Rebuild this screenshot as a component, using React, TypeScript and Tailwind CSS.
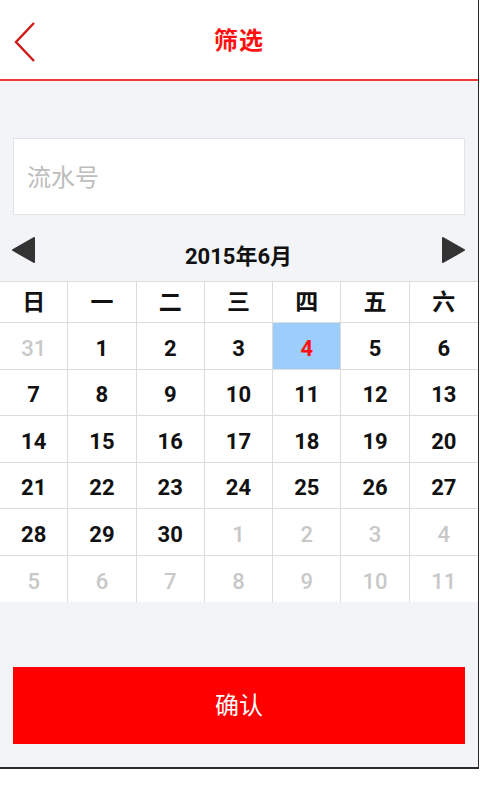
const weekdays = ["日", "一", "二", "三", "四", "五", "六"];

type Day = { n: number; cur: boolean };

const days: Day[] = [
  { n: 31, cur: false },
  ...Array.from({ length: 30 }, (_, i) => ({ n: i + 1, cur: true })),
  ...Array.from({ length: 11 }, (_, i) => ({ n: i + 1, cur: false })),
];

const font = { fontFamily: 'Roboto, "Noto Sans CJK SC", sans-serif' };

export default function App() {
  return (
    <div className="w-[480px] h-[800px] bg-white" style={font}>
      <div className="w-[479px] h-[769px] flex flex-col bg-[#f2f4f8] border-r border-b-2 border-[#2a2a2a]">
        {/* header */}
        <div className="h-[81px] bg-white border-b-2 border-[#f03a3a] relative flex items-center justify-center">
          <svg className="absolute left-[13px] top-[21px]" width="24" height="42" viewBox="0 0 24 42">
            <path d="M21 2 L3 21 L21 40" fill="none" stroke="#d01616" strokeWidth="2.4" />
          </svg>
          <span className="text-[24px] font-bold text-[#ff1010] tracking-[1px] mt-[2px]">筛选</span>
        </div>

        {/* input */}
        <div className="mt-[57px] mx-[13px] h-[77px] bg-white border border-[#e1e3e8] flex items-center px-[13px]">
          <span className="text-[24px] text-[#bdbdbd] mt-[2px]">流水号</span>
        </div>

        {/* month nav */}
        <div className="h-[66px] flex items-center justify-between px-[10px] pt-[4px]">
          <svg width="26" height="28" viewBox="0 0 26 28">
            <path d="M24 2 L3 14 L24 26 Z" fill="#333" stroke="#333" strokeWidth="2" strokeLinejoin="round" />
          </svg>
          <span className="text-[22px] font-bold text-[#111] mt-[12px]">2015年6月</span>
          <svg width="26" height="28" viewBox="0 0 26 28" className="mr-[1px]">
            <path d="M2 2 L23 14 L2 26 Z" fill="#333" stroke="#333" strokeWidth="2" strokeLinejoin="round" />
          </svg>
        </div>

        {/* calendar */}
        <div className="bg-white border-t border-[#dcdcdc]">
          <div className="grid grid-cols-7 h-[41px]">
            {weekdays.map((w, i) => (
              <div
                key={w}
                className={`flex items-center justify-center pt-[3px] text-[23px] font-bold text-[#111] border-b border-[#dcdcdc] ${i < 6 ? "border-r" : ""}`}
              >
                {w}
              </div>
            ))}
          </div>
          <div className="grid grid-cols-7">
            {days.map((d, i) => {
              const sel = d.cur && d.n === 4;
              const col = i % 7;
              const lastRow = i >= 35;
              return (
                <div
                  key={i}
                  className={`h-[46.5px] flex items-center justify-center pt-[5px] text-[22px] border-[#dcdcdc] ${col < 6 ? "border-r" : ""} ${lastRow ? "" : "border-b"} ${
                    sel ? "bg-[#9dcdfb] text-[#ff1010] font-bold" : d.cur ? "text-[#111] font-bold" : "text-[#c8c8c8] font-medium"
                  }`}
                >
                  {d.n}
                </div>
              );
            })}
          </div>
        </div>

        {/* confirm */}
        <div className="mt-[65px] mx-[13px] h-[77px] bg-[#ff0000] flex items-center justify-center">
          <span className="text-[24px] text-white">确认</span>
        </div>
      </div>
    </div>
  );
}
